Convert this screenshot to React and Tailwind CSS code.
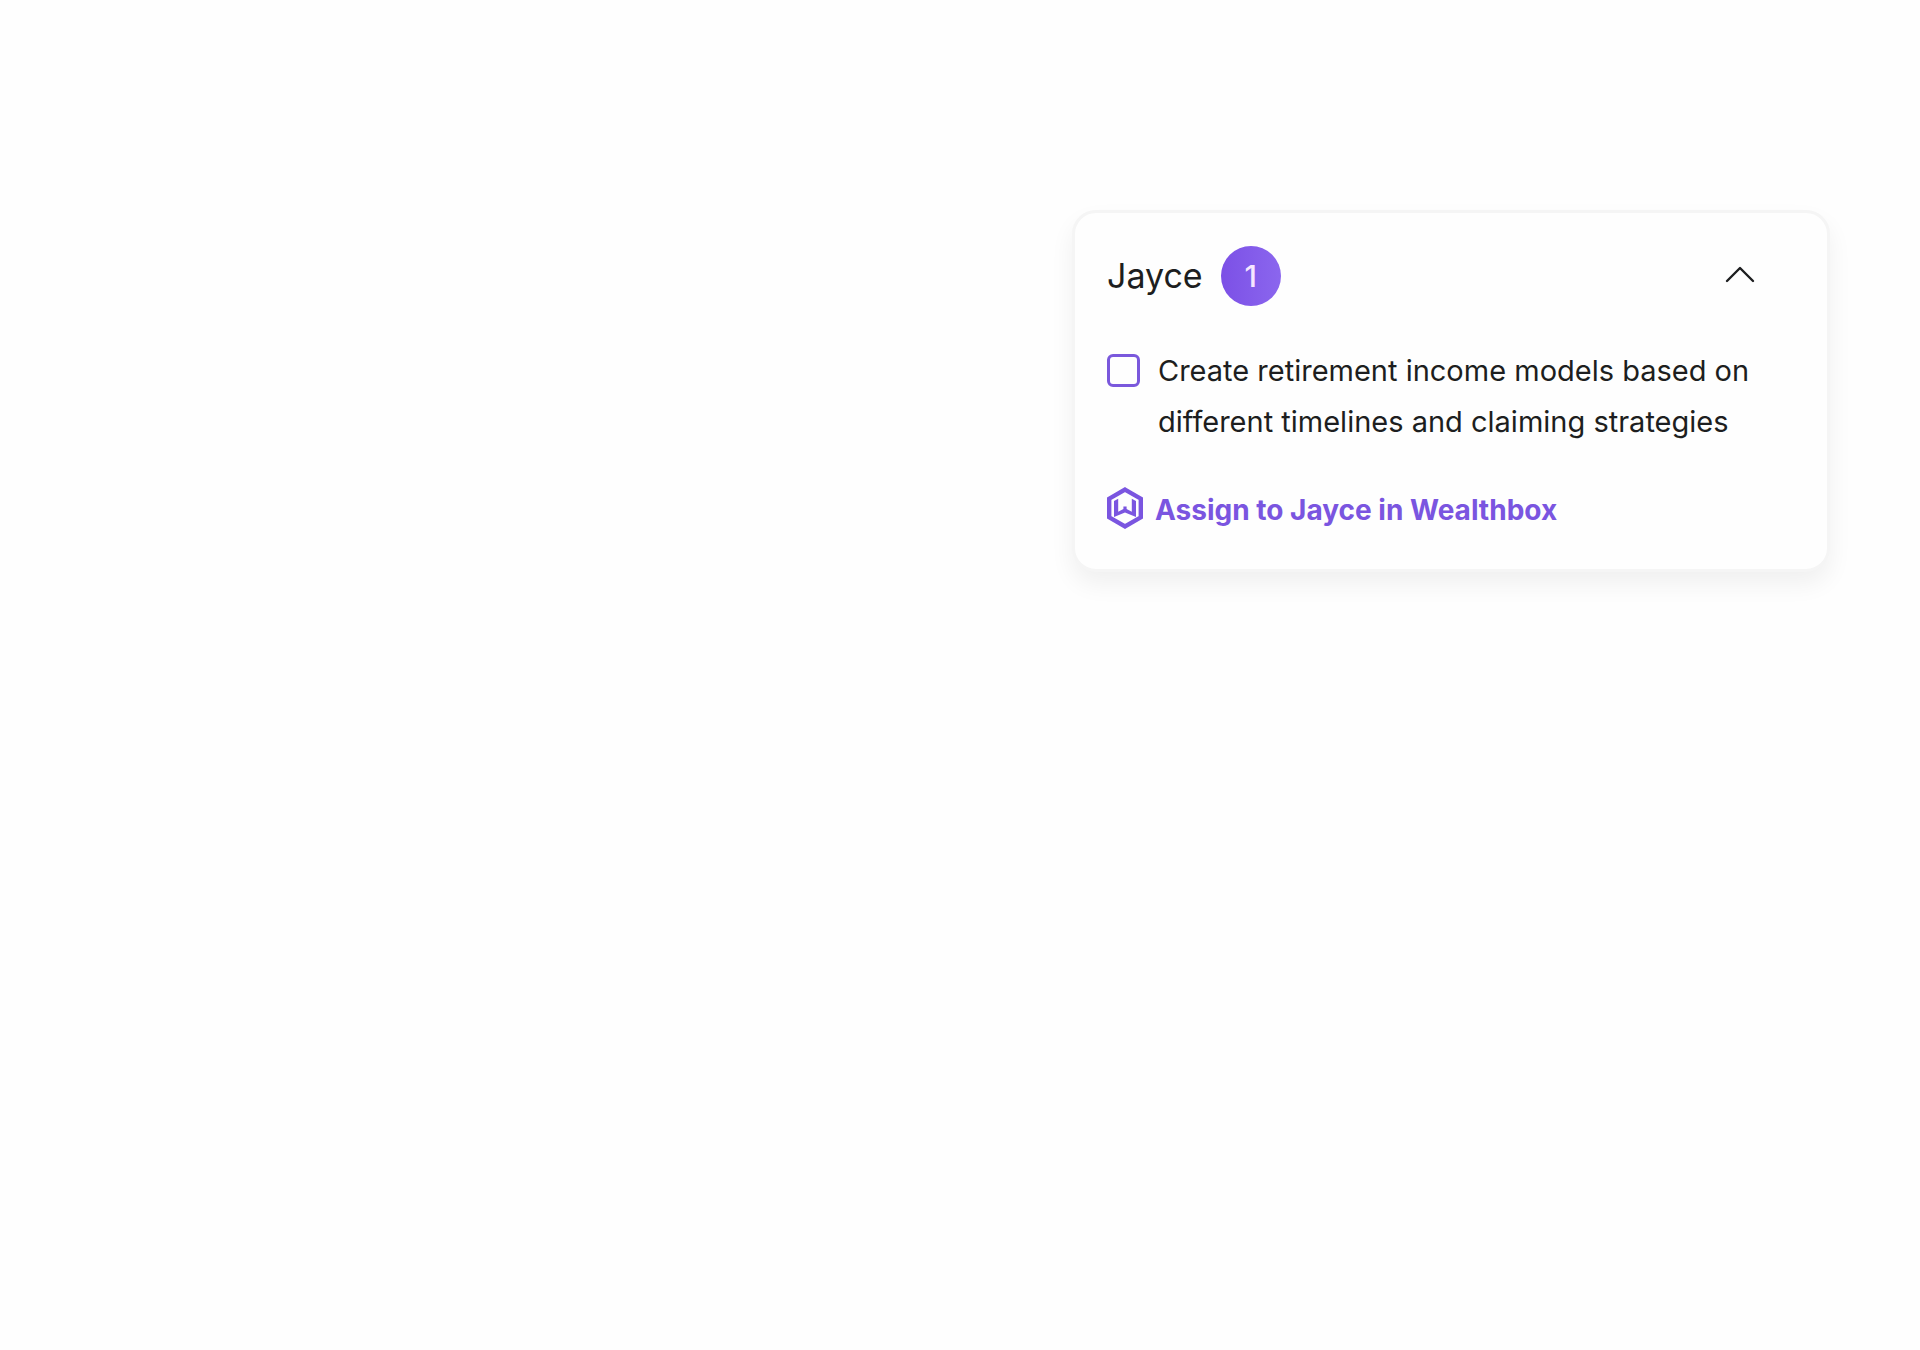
import { useState } from "react";

function ChevronUp() {
  return (
    <svg className="h-5 w-8" viewBox="0 0 32 20" fill="none" stroke="currentColor" strokeWidth="2.4" strokeLinecap="round" strokeLinejoin="round" aria-hidden="true">
      <path d="M4 15 17 2 30 15" />
    </svg>
  );
}

function WealthboxLogo() {
  return (
    <svg className="h-[42px] w-9 shrink-0" viewBox="0 0 36 42" aria-hidden="true">
      <path d="M18 2.6 33.8 11.7V30.3L18 39.4 2.2 30.3V11.7Z" fill="none" stroke="currentColor" strokeWidth="4.4" />
      <path d="M7 14 11.2 11.8V24.8L16.4 22V19.4H19.6V22L24.8 24.8V11.8L29 14V30L18 25.6 7 30Z" fill="currentColor" />
    </svg>
  );
}

export default function App() {
  const [open, setOpen] = useState(true);
  return (
    <main className="flex min-h-screen items-start justify-end bg-[#fefefe] pt-[210px] pr-[90px] pl-6 font-['Inter',sans-serif] text-[#1d1e20]">
      <section className="w-full max-w-[758px] rounded-3xl border-3 border-[#f5f5f5] bg-[#fefefe] px-8 pt-[33px] pb-9 shadow-[0_12px_24px_rgba(0,0,0,0.06)]">
        <header className="flex items-center pr-10">
          <h2 className="text-[34px] leading-[60px]">Jayce</h2>
          <span className="ml-[18px] flex size-[60px] items-center justify-center rounded-full bg-linear-to-r from-[#7c50e6] to-[#8b66ee] text-[30px] font-medium text-[#f6e6ff]">1</span>
          <button type="button" aria-label="Toggle Jayce's tasks" aria-expanded={open} onClick={() => setOpen(!open)} className="ml-auto">
            <ChevronUp />
          </button>
        </header>
        {open && (
          <label className="mt-[39px] flex items-start gap-[18px]">
            <input type="checkbox" className="mt-[9px] size-[33px] shrink-0 appearance-none rounded-md border-3 border-[#7a58dc] checked:bg-[#7a58dc]" />
            <span className="text-[29px] leading-[51px]">
              Create retirement income models based on
              <br />
              different timelines and claiming strategies
            </span>
          </label>
        )}
        <button type="button" className="mt-10 flex items-start gap-3 text-[#7a55e0]">
          <WealthboxLogo />
          <span className="text-[28px] leading-[46px] font-bold">Assign to Jayce in Wealthbox</span>
        </button>
      </section>
    </main>
  );
}
